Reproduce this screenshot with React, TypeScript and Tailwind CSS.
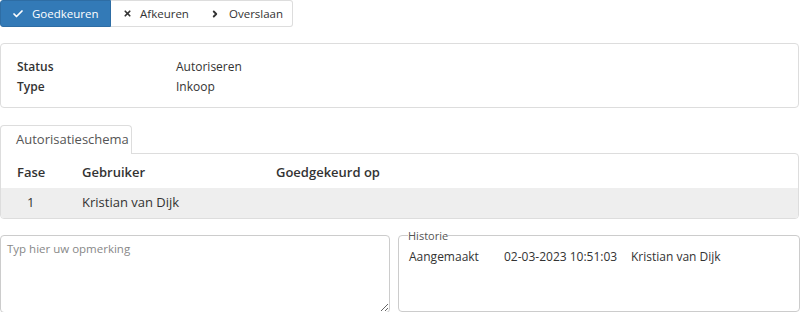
import { Check, X, ChevronRight } from 'lucide-react';

export default function App() {
  return (
    <div
      className="w-[800px] h-[312px] bg-white text-[13px] text-[#333] overflow-hidden"
      style={{ fontFamily: '"Open Sans", "Noto Sans", sans-serif' }}
    >
      {/* Action buttons */}
      <div className="flex h-[27px] text-[11.5px]">
        <button className="flex items-center gap-[8px] w-[111px] pl-[11px] bg-[#337ab7] text-white rounded-l-[3px] border border-[#2e6da4]">
          <Check className="w-[12px] h-[12px]" strokeWidth={3.5} />
          <span>Goedkeuren</span>
        </button>
        <button className="flex items-center gap-[8px] w-[89px] pl-[12px] border-y border-[#ddd]">
          <X className="w-[9px] h-[9px]" strokeWidth={4.5} />
          <span>Afkeuren</span>
        </button>
        <button className="flex items-center gap-[9px] w-[93px] pl-[10px] border border-l-0 border-[#ddd] rounded-r-[3px]">
          <ChevronRight className="w-[10px] h-[10px]" strokeWidth={4.5} />
          <span>Overslaan</span>
        </button>
      </div>

      {/* Info panel */}
      <div className="mt-[16px] mr-[1px] h-[65px] border border-[#ddd] rounded-[4px] pt-[13px] pl-[16px] text-[12px]">
        <div className="flex leading-[20px]">
          <span className="w-[159px] font-semibold">Status</span>
          <span>Autoriseren</span>
        </div>
        <div className="flex leading-[20px]">
          <span className="w-[159px] font-semibold">Type</span>
          <span>Inkoop</span>
        </div>
      </div>

      {/* Tabs */}
      <div className="mt-[17px] flex">
        <div className="h-[29px] w-[132px] border border-b-0 border-[#ddd] rounded-t-[4px] pl-[15px] flex items-center text-[#555] -mb-px bg-white relative z-10">
          Autorisatieschema
        </div>
      </div>
      <div className="mr-[1px] h-[66px] border border-[#ddd] rounded-b-[4px] rounded-tr-[4px] overflow-hidden">
        <div className="flex items-center h-[34px] pt-[3px] font-semibold">
          <span className="w-[65px] pl-[16px]">Fase</span>
          <span className="w-[194px] pl-[16px]">Gebruiker</span>
          <span className="pl-[16px]">Goedgekeurd op</span>
        </div>
        <div className="flex items-center h-[30px] bg-[#eee]">
          <span className="w-[65px] pl-[26px]">1</span>
          <span className="pl-[16px]">Kristian van Dijk</span>
        </div>
      </div>

      {/* Bottom */}
      <div className="mt-[16px] flex gap-[8px]">
        <textarea
          className="w-[390px] h-[78px] border border-[#ccc] rounded-[4px] px-[6px] py-[4px] placeholder:text-[#888] text-[11.5px] resize-y outline-none"
          placeholder="Typ hier uw opmerking"
        />
        <fieldset className="flex-1 h-[82px] -mt-[5px] border border-[#ccc] rounded-[4px] px-[10px]">
          <legend className="text-[11px] text-[#555] leading-[11px] -ml-[1px]">Historie</legend>
          <div className="flex mt-[7px] text-[12px]">
            <span className="w-[95px]">Aangemaakt</span>
            <span className="w-[127px]">02-03-2023 10:51:03</span>
            <span>Kristian van Dijk</span>
          </div>
        </fieldset>
      </div>
    </div>
  );
}
